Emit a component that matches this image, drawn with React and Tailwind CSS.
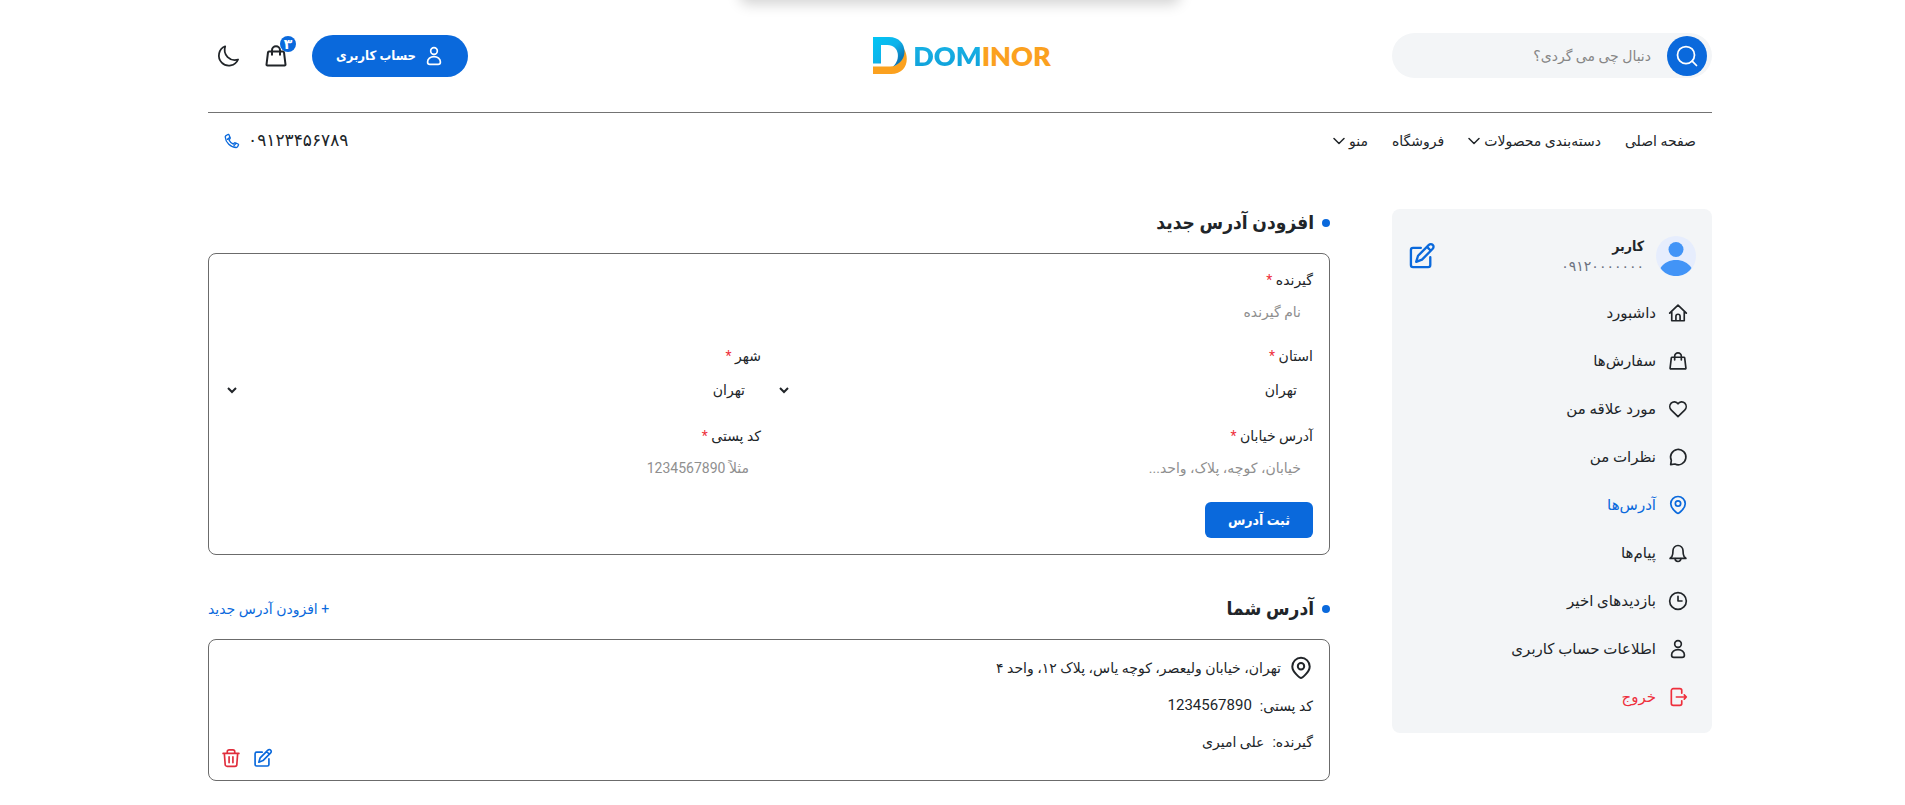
import React, { useState } from 'react';
import clsx from 'clsx';

const FONT = "font-[Roboto,'DejaVu_Sans',sans-serif]";
// bold Persian text is set in the condensed cut
const BOLD = "font-[Roboto,'DejaVu_Sans_Condensed','DejaVu_Sans',sans-serif] font-bold";

function Icon({ className = 'size-6', strokeWidth = 1.75, children }) {
  return (
    <svg
      viewBox="0 0 24 24"
      fill="none"
      stroke="currentColor"
      strokeWidth={strokeWidth}
      strokeLinecap="round"
      strokeLinejoin="round"
      className={clsx('shrink-0', className)}
      aria-hidden="true"
    >
      {children}
    </svg>
  );
}

const HomeIcon = (props) => (
  <Icon {...props}>
    <path d="M2 12.200 12 2.500l10 9.700M4.500 10.500v10.800h15V10.500M9.500 21v-5a2.500 2.500 0 0 1 5 0v5" />
  </Icon>
);

const BagIcon = (props) => (
  <Icon {...props}>
    <path d="M5 7.500h14a1 1 0 0 1 1 .85l1.500 12.200a.8.8 0 0 1-.8.900H3.300a.8.8 0 0 1-.8-.900L4 8.350a1 1 0 0 1 1-.85Z" />
    <path d="M8 10.800V6.200a4 4 0 0 1 8 0v4.600" />
  </Icon>
);

const HeartIcon = (props) => (
  <Icon {...props}>
    <path d="M12 21.200 4 13.300a5.900 5.900 0 0 1-.2-8.300A5.400 5.400 0 0 1 12 5.700 5.400 5.400 0 0 1 20.200 5a5.900 5.900 0 0 1-.2 8.300L12 21.200Z" />
  </Icon>
);

const ChatIcon = (props) => (
  <Icon {...props}>
    <path d="M3.200 21.200l.8-5.100A9.200 9.200 0 1 1 8.300 20.400l-5.100.8Z" />
  </Icon>
);

const PinIcon = (props) => (
  <Icon {...props}>
    <path d="M12 22c-.8 0-8.700-5.700-8.700-11.500a8.700 8.700 0 0 1 17.400 0C20.700 16.300 12.800 22 12 22Z" />
    <circle cx="12" cy="10.300" r="3.200" />
  </Icon>
);

const BellIcon = (props) => (
  <Icon {...props}>
    <path d="M4.700 16.200C5.900 14.200 6 12.300 6 9a6 6 0 0 1 12 0c0 3.300.1 5.200 1.300 7.200l2.200 2.300h-19l2.200-2.300Z" />
    <path d="M8.500 18.700a3.500 3.500 0 0 0 7 0" />
  </Icon>
);

const ClockIcon = (props) => (
  <Icon {...props}>
    <circle cx="12" cy="12" r="10" />
    <path d="M12 6.500V12h4.800" />
  </Icon>
);

const UserIcon = (props) => (
  <Icon {...props}>
    <circle cx="12" cy="6" r="4" />
    <path d="M12 12.800c4.400 0 7.700 2.900 7.700 6.300 0 1.700-1.100 2.900-2.800 2.900H7.100c-1.700 0-2.800-1.200-2.800-2.900 0-3.400 3.300-6.300 7.700-6.300Z" />
  </Icon>
);

const LogoutIcon = (props) => (
  <Icon {...props}>
    <path d="M16.500 7.500V4.300a2.300 2.300 0 0 0-2.300-2.300H6.300A2.300 2.300 0 0 0 4 4.300v15.400A2.300 2.300 0 0 0 6.300 22h7.900a2.300 2.300 0 0 0 2.300-2.300v-3.200" />
    <path d="M10 12h12M19.500 9.500 22 12l-2.500 2.500" />
  </Icon>
);

const EditIcon = (props) => (
  <Icon {...props}>
    <path d="M11 5H4.300A1.800 1.800 0 0 0 2.500 6.800v13a1.800 1.800 0 0 0 1.800 1.800h13a1.800 1.800 0 0 0 1.800-1.800V13" />
    <path d="M7 17l1.600-5.200 9.300-9.300a2.300 2.300 0 0 1 3.300 0 2.300 2.300 0 0 1 0 3.300l-9.200 9.300L7 17ZM16.300 4.200l3.300 3.300" />
  </Icon>
);

const TrashIcon = (props) => (
  <Icon {...props}>
    <path d="M2.500 6.500h19M7.500 6V4.500a2.200 2.200 0 0 1 2.200-2.200h4.600a2.200 2.200 0 0 1 2.200 2.200V6M4 6.500l1 13.200A2.300 2.300 0 0 0 7.300 22h9.400a2.300 2.300 0 0 0 2.300-2.300L20 6.500M9.700 10.500v7.200M14.300 10.500v7.200" />
  </Icon>
);

const MoonIcon = (props) => (
  <Icon {...props}>
    <path d="M9.200 2.300a10 10 0 1 0 12.900 13.200C14 17.800 6.500 11 9.200 2.300Z" />
  </Icon>
);

const SearchIcon = (props) => (
  <Icon {...props}>
    <circle cx="11" cy="11" r="8.500" />
    <path d="m17.200 17.200 4.300 4.300" />
  </Icon>
);

const PhoneIcon = (props) => (
  <Icon {...props}>
    <path d="M2.500 4.300 5.800 2.300a1.200 1.200 0 0 1 1.700.6l1.800 4.300a1.200 1.200 0 0 1-.3 1.300L7.300 10a14 14 0 0 0 6.700 6.700l1.500-1.700a1.200 1.200 0 0 1 1.300-.3l4.300 1.800a1.200 1.200 0 0 1 .6 1.600l-1.300 2.500a2.200 2.200 0 0 1-2 1.200C10 21.800 2.300 14 1.900 6a2 2 0 0 1 .6-1.700Z" />
    <path d="m15 19 3-3.500M5 9.500l3.500-2.500" />
  </Icon>
);

const ChevronIcon = (props) => (
  <Icon {...props}>
    <path d="m2 7 10 10L22 7" />
  </Icon>
);

const NAV_LINKS = [
  { label: 'صفحه اصلی' },
  { label: 'دسته‌بندی محصولات', hasMenu: true },
  { label: 'فروشگاه' },
  { label: 'منو', hasMenu: true },
];

const MENU_ITEMS = [
  { label: 'داشبورد', icon: HomeIcon },
  { label: 'سفارش‌ها', icon: BagIcon },
  { label: 'مورد علاقه من', icon: HeartIcon },
  { label: 'نظرات من', icon: ChatIcon },
  { label: 'آدرس‌ها', icon: PinIcon, active: true },
  { label: 'پیام‌ها', icon: BellIcon },
  { label: 'بازدیدهای اخیر', icon: ClockIcon },
  { label: 'اطلاعات حساب کاربری', icon: UserIcon },
  { label: 'خروج', icon: LogoutIcon, danger: true },
];

function Logo() {
  return (
    <a href="#" dir="ltr" aria-label="DOMINOR" className="mr-1 flex items-center gap-1.5">
      <svg viewBox="0 0 34 38" className="h-[38px] w-[34px]" aria-hidden="true">
        <defs>
          <linearGradient id="logo-blue" x1="0" y1="0" x2="1" y2="1">
            <stop offset="0" stopColor="#00c6f5" />
            <stop offset="0.500" stopColor="#0fb2ea" />
            <stop offset="0.800" stopColor="#0b78b8" />
          </linearGradient>
        </defs>
        <path fill="#fba11f" d="M0 29.500h17c8 0 12-6 14-17.500 6 10 2.500 25-13 25H0Z" />
        <path fill="url(#logo-blue)" d="M0 0h16c10 0 15.500 7 15.500 14.500 0 7-4.500 12.500-11.500 15C28 23 26.500 8 14.500 8H8v18.500H0Z" />
      </svg>
      <span className="font-[Lato,sans-serif] text-[27px] leading-10 font-extrabold">
        <span className="bg-gradient-to-b from-[#19b5e8] to-[#0f9fd8] bg-clip-text text-transparent">DOM</span>
        <span className="text-[#fba11f]">INOR</span>
      </span>
    </a>
  );
}

function Header() {
  return (
    <header>
      <div className="flex items-center justify-between border-b border-[#737373] pt-[33px] pb-[34px]">
        <div className="flex flex-1 justify-start">
          <form className="flex h-[45px] w-80 items-center rounded-full bg-[#f3f5f7] px-[5px]" onSubmit={(e) => e.preventDefault()}>
            <button type="submit" aria-label="جستجو" className="flex size-10 items-center justify-center rounded-full bg-[#0a69dc] text-white">
              <SearchIcon className="size-6" />
            </button>
            <input
              type="text"
              aria-label="دنبال چی می گردی؟"
              placeholder="دنبال چی می گردی؟"
              className="min-w-0 flex-1 bg-transparent px-4 text-sm outline-none placeholder:text-[#868686]"
            />
          </form>
        </div>

        <Logo />

        <div className="flex flex-1 items-center justify-end gap-6 pl-2">
          <a href="#" className={clsx('flex h-[42px] w-[156px] items-center justify-center gap-2 rounded-full bg-[#0a69dc] text-[13px] text-white', BOLD)}>
            <UserIcon className="size-5" strokeWidth={2} />
            حساب کاربری
          </a>
          <button type="button" aria-label="سبد خرید" className="relative">
            <BagIcon className="size-6" strokeWidth={2} />
            <span className="absolute -top-2 -right-2 flex size-4 items-center justify-center rounded-full bg-[#0a69dc] text-sm leading-4 font-bold text-white">
              ۳
            </span>
          </button>
          <button type="button" aria-label="حالت شب">
            <MoonIcon className="size-6" />
          </button>
        </div>
      </div>

      <div className="flex h-14 items-center justify-between px-4">
        <nav className="flex items-center gap-6">
          {NAV_LINKS.map((link) => (
            <a key={link.label} href="#" className="flex items-center gap-1 text-sm">
              {link.label}
              {link.hasMenu && <ChevronIcon className="size-3" strokeWidth={3} />}
            </a>
          ))}
        </nav>
        <a href="tel:09123456789" className="flex items-center gap-2">
          <span className="text-[17px]">۰۹۱۲۳۴۵۶۷۸۹</span>
          <PhoneIcon className="size-4 text-[#0a69dc]" strokeWidth={2} />
        </a>
      </div>
    </header>
  );
}

function Sidebar() {
  return (
    <aside className="w-80 shrink-0 rounded-lg bg-[#f3f5f7] p-4 pt-[26px] pb-3">
      <div className="flex h-[42px] items-center">
        <svg viewBox="0 0 40 40" className="size-10" aria-hidden="true">
          <circle cx="20" cy="20" r="20" fill="#e6edfd" />
          <circle cx="20" cy="13.500" r="7.500" fill="#4294f7" />
          <path fill="#4294f7" d="M4.500 32C8 26.500 14 24 20 24S32 26.500 35.500 32C32 37.500 26 40 20 40S8 37.500 4.500 32Z" />
        </svg>
        <div className="mr-3 flex-1">
          <p className={clsx('text-sm leading-5', BOLD)}>کاربر</p>
          <p className="text-sm leading-5 text-[#6b7280]">۰۹۱۲۰۰۰۰۰۰۰</p>
        </div>
        <button type="button" aria-label="ویرایش" className="text-[#0a69dc]">
          <EditIcon className="size-7" strokeWidth={2} />
        </button>
      </div>
      <nav className="mt-3">
        {MENU_ITEMS.map(({ label, icon: ItemIcon, active, danger }) => (
          <a
            key={label}
            href="#"
            className={clsx(
              'flex h-12 items-center gap-3 px-2 text-[15px]',
              active && 'text-[#0a69dc]',
              danger && 'text-[#ee2f3c]'
            )}
          >
            <ItemIcon className="size-5" strokeWidth={2} />
            {label}
          </a>
        ))}
      </nav>
    </aside>
  );
}

function SectionTitle({ children }) {
  return (
    <h2 className={clsx('flex items-center gap-2 text-[19px] leading-7', BOLD)}>
      <span className="size-2 rounded-full bg-[#0a69dc]" />
      {children}
    </h2>
  );
}

function Field({ id, label, className, children }) {
  return (
    <div className={clsx('flex flex-col gap-1', className)}>
      <label htmlFor={id} className="text-sm leading-5">
        {label} <span className="text-[#ee2f3c]">*</span>
      </label>
      {children}
    </div>
  );
}

const INPUT = 'h-9 w-full bg-transparent px-3 text-sm outline-none placeholder:text-[#8f8f8f]';
const SELECT = 'h-10 w-full bg-transparent px-3 text-sm outline-none';

function AddressForm() {
  const [form, setForm] = useState({ receiver: '', province: 'تهران', city: 'تهران', street: '', postal: '' });

  const handleChange = (e) => setForm({ ...form, [e.target.name]: e.target.value });

  return (
    <form
      className="grid grid-cols-2 gap-4 rounded-lg border border-[#6b6b6b] p-4"
      onSubmit={(e) => e.preventDefault()}
    >
      <Field id="receiver" label="گیرنده" className="col-span-2">
        <input id="receiver" name="receiver" value={form.receiver} onChange={handleChange} placeholder="نام گیرنده" className={INPUT} />
      </Field>
      <Field id="province" label="استان">
        <select id="province" name="province" value={form.province} onChange={handleChange} className={SELECT}>
          <option>تهران</option>
        </select>
      </Field>
      <Field id="city" label="شهر">
        <select id="city" name="city" value={form.city} onChange={handleChange} className={SELECT}>
          <option>تهران</option>
        </select>
      </Field>
      <Field id="street" label="آدرس خیابان">
        <input id="street" name="street" value={form.street} onChange={handleChange} placeholder="خیابان، کوچه، پلاک، واحد..." className={INPUT} />
      </Field>
      <Field id="postal" label="کد پستی">
        <input id="postal" name="postal" value={form.postal} onChange={handleChange} placeholder="مثلاً 1234567890" className={INPUT} />
      </Field>
      <div className="col-span-2">
        <button type="submit" className={clsx('h-9 rounded-md bg-[#0a69dc] px-[23px] text-sm text-white', BOLD)}>
          ثبت آدرس
        </button>
      </div>
    </form>
  );
}

function AddressCard() {
  return (
    <article className="flex items-end justify-between rounded-lg border border-[#6b6b6b] px-4 pt-3 pb-2 text-sm">
      <div>
        <p className="flex h-8 items-center gap-2">
          <PinIcon className="size-6" strokeWidth={2} />
          تهران، خیابان ولیعصر، کوچه یاس، پلاک ۱۲، واحد ۴
        </p>
        <p className="mt-2.5 flex h-6 items-center gap-2">
          <span>کد پستی:</span>
          <span className="text-[15px]">1234567890</span>
        </p>
        <p className="mt-3 mb-[18px] flex h-6 items-center gap-2">
          <span>گیرنده:</span>
          <span>علی امیری</span>
        </p>
      </div>
      <div className="mb-1 -ml-1 flex items-center gap-3">
        <button type="button" aria-label="ویرایش آدرس" className="text-[#0a69dc]">
          <EditIcon className="size-5" strokeWidth={2} />
        </button>
        <button type="button" aria-label="حذف آدرس" className="text-[#e02d3c]">
          <TrashIcon className="size-5" strokeWidth={2} />
        </button>
      </div>
    </article>
  );
}

export default function App() {
  return (
    <div dir="rtl" className={clsx('relative overflow-hidden bg-white pl-[15px] text-base text-[#212529]', FONT)}>
      <div className="absolute -top-10 right-0 left-[15px] flex justify-center">
        <div className="h-10 w-[440px] rounded-lg bg-white shadow-[0_4px_14px_rgba(0,0,0,0.180)]" />
      </div>
      <div className="mx-auto max-w-[1536px] px-4">
        <Header />
        <div className="mt-10 flex items-start gap-[62px] pb-6">
          <Sidebar />
          <main className="min-w-0 flex-1">
            <SectionTitle>افزودن آدرس جدید</SectionTitle>
            <div className="mt-4">
              <AddressForm />
            </div>
            <div className="mt-10 mb-4 flex items-center justify-between">
              <SectionTitle>آدرس شما</SectionTitle>
              <button type="button" className="text-sm text-[#0a69dc]">+ افزودن آدرس جدید</button>
            </div>
            <AddressCard />
          </main>
        </div>
      </div>
    </div>
  );
}
